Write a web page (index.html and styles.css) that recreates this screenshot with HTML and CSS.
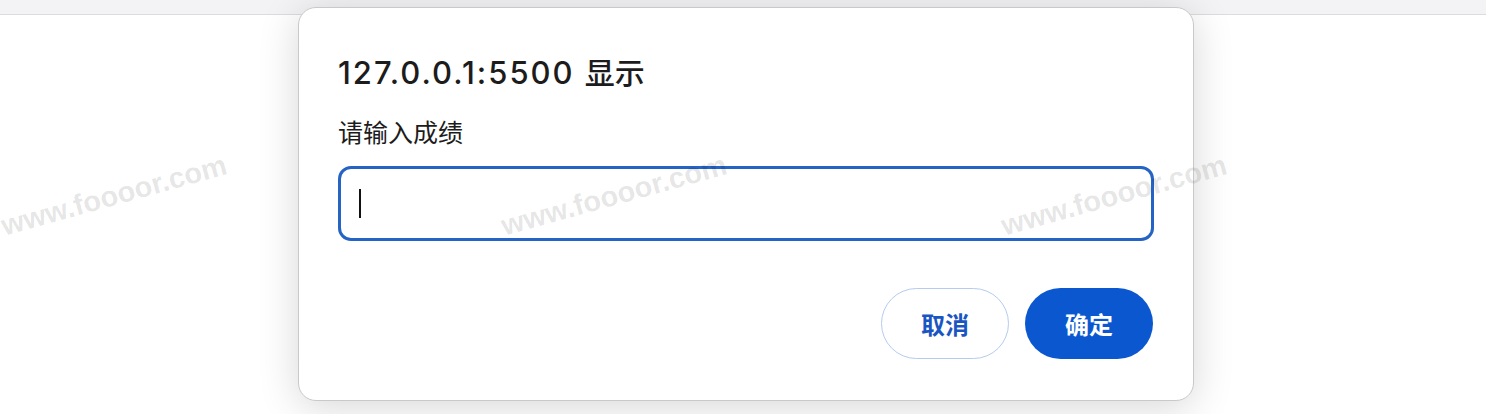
FILE: index.html
```html
<!DOCTYPE html>
<html>
<head>
  <title>127.0.0.1:5500 显示</title>
  <link rel="stylesheet" href="styles.css">
</head>
<body>
  <div id="topbar"></div>
  <div id="page"></div>

  <div id="dialog">
    <h1 class="dialog-title">127.0.0.1:5500 <span class="cjk">显示</span></h1>
    <p class="dialog-msg">请输入成绩</p>
    <div class="prompt-input"><span class="caret"></span></div>
    <div class="dialog-actions">
      <button class="btn btn-cancel">取消</button>
      <button class="btn btn-ok">确定</button>
    </div>
  </div>

  <div id="watermarks">
    <span class="mark">www.foooor.com</span>
    <span class="mark">www.foooor.com</span>
    <span class="mark">www.foooor.com</span>
  </div>
</body>
</html>
```

FILE: styles.css
```css
html, body {
  margin: 0;
  padding: 0;
  height: 100%;
  background-color: #ffffff;
  font-family: "Liberation Sans", "Noto Sans CJK SC", sans-serif;
  color: #1f1f1f;
  overflow: hidden;
}
#topbar {
  height: 14px;
  background-color: #f3f3f6;
  border-bottom: 1px solid #dcdcdf;
}
#page {
  height: 399px;
}
#dialog {
  position: absolute;
  top: 7px;
  left: 298px;
  width: 816px;
  padding: 43px 39px 41px 39px;
  background-color: #ffffff;
  border: 1px solid #c9c9c9;
  border-radius: 18px;
  box-shadow: 0 6px 40px rgba(0, 0, 0, 0.16);
}
.dialog-title {
  margin: 0;
  font-family: Inter, "Noto Sans CJK SC", sans-serif;
  font-size: 31px;
  line-height: 40px;
  font-weight: 500;
  letter-spacing: 2px;
  color: #1c1c1c;
}
.dialog-title .cjk {
  font-family: "Noto Sans CJK SC", sans-serif;
  font-size: 30px;
  font-weight: 500;
  letter-spacing: 0;
}
.dialog-msg {
  margin: 20px 0 0 0;
  font-family: "Noto Sans CJK SC", sans-serif;
  font-size: 25px;
  line-height: 36px;
  color: #1c1c1c;
}
.prompt-input {
  margin-top: 17px;
  height: 69px;
  border: 3px solid #2563c4;
  border-radius: 13px;
  display: flex;
  align-items: center;
  padding-left: 18px;
}
.caret {
  width: 2px;
  height: 29px;
  background-color: #111111;
}
.dialog-actions {
  display: flex;
  justify-content: flex-end;
  gap: 16px;
  margin-top: 47px;
  padding-right: 1px;
}
.btn {
  width: 128px;
  height: 71px;
  border-radius: 36px;
  font-family: "Noto Sans CJK SC", sans-serif;
  font-size: 24px;
  font-weight: bold;
  cursor: pointer;
}
.btn-cancel {
  background-color: #ffffff;
  color: #1a56c2;
  border: 1.5px solid #b5cbef;
}
.btn-ok {
  background-color: #0b57d0;
  color: #ffffff;
  border: none;
}
#watermarks {
  position: absolute;
  top: 173px;
  left: -136px;
  display: flex;
  pointer-events: none;
}
.mark {
  width: 500px;
  text-align: center;
  font-family: "Liberation Sans", sans-serif;
  font-weight: bold;
  font-size: 29px;
  line-height: 44px;
  color: rgba(0, 0, 0, 0.11);
  transform: rotate(-15.5deg);
}
```
